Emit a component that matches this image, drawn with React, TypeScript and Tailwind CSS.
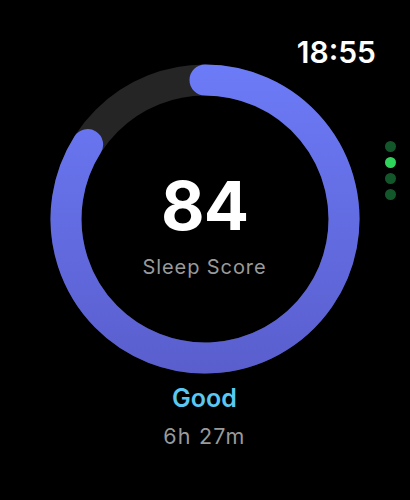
import React from 'react';

const SCORE = 84;
const SIZE = 310;
const STROKE = 31;
const R = 139;

// arc path from 12 o'clock, clockwise, for a fraction of the circle
const arcPath = (fraction: number) => {
  const c = SIZE / 2;
  const a = fraction * 2 * Math.PI;
  const x = c + R * Math.sin(a);
  const y = c - R * Math.cos(a);
  const large = fraction > 0.5 ? 1 : 0;
  return `M ${c} ${c - R} A ${R} ${R} 0 ${large} 1 ${x.toFixed(2)} ${y.toFixed(2)}`;
};

const ScoreRing: React.FC<{ score: number }> = ({ score }) => (
  <div className="relative w-[310px] h-[310px]">
    <svg width={SIZE} height={SIZE} viewBox={`0 0 ${SIZE} ${SIZE}`}>
      <defs>
        <linearGradient id="ring" x1="0" y1="0" x2="0" y2={SIZE} gradientUnits="userSpaceOnUse">
          <stop offset="0%" stopColor="#6c7bf7" />
          <stop offset="100%" stopColor="#5a5ecd" />
        </linearGradient>
      </defs>
      <circle cx={SIZE / 2} cy={SIZE / 2} r={R} fill="none" stroke="#252525" strokeWidth={STROKE} />
      <path
        d={arcPath(score / 100)}
        fill="none"
        stroke="url(#ring)"
        strokeWidth={STROKE}
        strokeLinecap="round"
      />
    </svg>
    <div className="absolute inset-0 flex flex-col items-center pt-[108px]">
      <span className="text-[67px] leading-none font-bold text-white tracking-[-1px]">{score}</span>
      <span className="mt-[18px] text-[20px] leading-none text-[#9a9a9a] tracking-[0.9px]">Sleep Score</span>
    </div>
  </div>
);

export default function App() {
  return (
    <div
      className="relative w-[410px] h-[500px] bg-black overflow-hidden"
      style={{ fontFamily: 'Inter, "Noto Sans", sans-serif' }}
    >
      {/* clock */}
      <div className="absolute top-[37px] right-[34px] text-[30px] leading-none font-semibold text-white">18:55</div>

      {/* page dots */}
      <div className="absolute top-[141px] left-[385px] flex flex-col gap-[5px]">
        <span className="w-[11px] h-[11px] rounded-full bg-[#12572a]" />
        <span className="w-[11px] h-[11px] rounded-full bg-[#2fd45a]" />
        <span className="w-[11px] h-[11px] rounded-full bg-[#12572a]" />
        <span className="w-[11px] h-[11px] rounded-full bg-[#12572a]" />
      </div>

      <div className="flex flex-col items-center pt-[64px] pr-[1px]">
        <ScoreRing score={SCORE} />
        <span className="mt-[12px] text-[25px] leading-none font-semibold text-[#5ac8f2]">Good</span>
        <span className="mt-[15px] text-[21.5px] leading-none text-[#9a9a9a] tracking-[1.2px]">6h 27m</span>
      </div>
    </div>
  );
}
